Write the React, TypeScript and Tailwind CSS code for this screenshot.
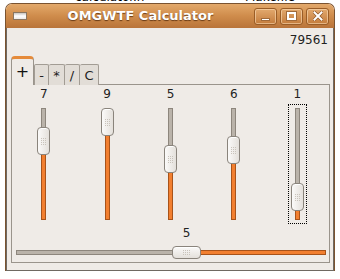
const values = [7, 9, 5, 6, 1];

function Grip({ vertical }: { vertical: boolean }) {
  const cols = vertical ? 3 : 4;
  const rows = vertical ? 4 : 3;
  const dots = [];
  for (let r = 0; r < rows; r++) {
    for (let c = 0; c < cols; c++) {
      dots.push(<rect key={`${r}-${c}`} x={c * 2} y={r * 2} width="1" height="1" fill="#c9c3bb" />);
    }
  }
  return (
    <svg width={cols * 2 - 1} height={rows * 2 - 1} className="block">
      {dots}
    </svg>
  );
}

function VSlider({ value, focused }: { value: number; focused: boolean }) {
  const top = Math.round(84 - (value / 9) * 84);
  return (
    <div className="flex flex-col items-center">
      <div className="text-[12px] leading-[14px] text-[#222]">{value}</div>
      <div
        className={
          focused
            ? "mt-[3px] border border-dotted border-black px-[2px] py-[3px]"
            : "mt-[3px] border border-dotted border-transparent px-[2px] py-[3px]"
        }
      >
        <div className="relative w-[13px] h-[112px]">
          <div className="absolute left-[4px] top-0 w-[5px] h-full bg-[#bab3aa] border border-[#8d867d]" />
          <div
            className="absolute left-[4px] bottom-0 w-[5px] bg-[#f27f30] border border-[#a8531a]"
            style={{ height: 112 - top - 14 }}
          />
          {/* handle */}
          <div
            className="absolute left-0 w-[13px] h-[28px] rounded-[4px] border border-[#8a847c] bg-gradient-to-r from-[#fbfaf9] to-[#e4e0db] flex items-center justify-center shadow-[inset_0_1px_0_#fff]"
            style={{ top }}
          >
            <Grip vertical />
          </div>
        </div>
      </div>
    </div>
  );
}

function HSlider({ value }: { value: number }) {
  const left = Math.round((value / 9) * 281);
  return (
    <div className="flex flex-col">
      <div className="text-[12px] leading-[14px] text-[#222] pl-[4px]">
        <div className="w-[29px] text-center" style={{ marginLeft: left }}>
          {value}
        </div>
      </div>
      <div className="mt-[6px] pl-[4px]">
        <div className="relative w-[310px] h-[13px]">
          <div className="absolute left-0 top-[4px] h-[5px] w-full bg-[#bab3aa] border border-[#8d867d]" />
          <div
            className="absolute right-0 top-[4px] h-[5px] bg-[#f27f30] border border-[#a8531a]"
            style={{ width: 310 - left - 14 }}
          />
          <div
            className="absolute top-0 w-[29px] h-[13px] rounded-[4px] border border-[#8a847c] bg-gradient-to-b from-[#fbfaf9] to-[#e4e0db] flex items-center justify-center shadow-[inset_0_1px_0_#fff]"
            style={{ left }}
          >
            <Grip vertical={false} />
          </div>
        </div>
      </div>
    </div>
  );
}

function TitleButton({ children }: { children: React.ReactNode }) {
  return (
    <div className="w-[23px] h-[17px] rounded-[3px] border border-[#9a5d27] bg-gradient-to-b from-[#e2a96e] to-[#c47c3b] shadow-[inset_0_0_0_1px_rgba(255,225,190,0.55)] flex items-center justify-center">
      {children}
    </div>
  );
}

export default function App() {
  return (
    <div className="relative w-[340px] h-[279px] bg-white overflow-hidden font-['DejaVu_Sans',sans-serif]">
      {/* desktop behind the window */}
      <div className="absolute left-[75px] top-[-10px] text-[12px] leading-[14px] text-black">calculator.h</div>
      <div className="absolute left-[245px] top-[-10px] text-[12px] leading-[14px] text-black">Makefile</div>

      <div className="relative ml-[5px] mt-[3px] w-[330px] h-[268px] flex flex-col rounded-t-[7px] overflow-hidden border border-[#7a5330] border-b-0">
        {/* title bar */}
        <div className="h-[24px] flex items-center pl-[7px] pr-[5px] bg-gradient-to-b from-[#e3a96b] via-[#cf8c4b] to-[#b9743a]">
          <div className="w-[14px] h-[8px] bg-gradient-to-b from-[#c9c5c0] via-[#ffffff] to-[#ece9e5] border border-[#8a7660]" />
          <div className="flex-1 text-center text-white font-bold text-[13px] leading-[16px] [text-shadow:0_1px_1px_rgba(80,40,10,0.8)]">
            OMGWTF Calculator
          </div>
          <div className="flex gap-[3px]">
            <TitleButton>
              <div className="w-[9px] h-[3px] bg-white mt-[6px] border border-[#a06a3a]" />
            </TitleButton>
            <TitleButton>
              <div className="w-[9px] h-[8px] border-2 border-white outline outline-1 outline-[#a06a3a]" />
            </TitleButton>
            <TitleButton>
              <svg width="10" height="10" viewBox="0 0 10 10">
                <path d="M1.5 1.5 L8.5 8.5 M8.5 1.5 L1.5 8.5" stroke="#8a5226" strokeWidth="3.2" strokeLinecap="square" />
                <path d="M1.5 1.5 L8.5 8.5 M8.5 1.5 L1.5 8.5" stroke="#ffffff" strokeWidth="2" strokeLinecap="square" />
              </svg>
            </TitleButton>
          </div>
        </div>

        {/* body */}
        <div className="flex-1 bg-[#efebe7] border-l border-r border-b border-[#6f6962] px-[4px] flex flex-col">
          <div className="mt-[5px] h-[14px] text-right text-[12px] leading-[14px] text-[#222] pr-[1px]">79561</div>

          {/* tabs */}
          <div className="mt-[9px] flex items-end relative z-10 -mb-px">
            <div className="w-[23px] h-[29px] rounded-t-[4px] border-t-[3px] border-t-[#e58a3a] border-l border-r border-[#9a948c] bg-[#efebe7] flex items-center justify-center text-[16px] leading-none text-[#111] pb-[1px]">
              +
            </div>
            <div className="w-[15px] h-[21px] rounded-t-[2px] border border-b-0 border-[#a29c94] bg-[#e2ddd7] flex items-center justify-center text-[13px] leading-none text-[#222]">
              -
            </div>
            <div className="w-[16px] h-[21px] rounded-t-[2px] border border-b-0 border-l-0 border-[#a29c94] bg-[#e2ddd7] flex items-center justify-center text-[13px] leading-none text-[#222]">
              *
            </div>
            <div className="w-[15px] h-[21px] rounded-t-[2px] border border-b-0 border-l-0 border-[#a29c94] bg-[#e2ddd7] flex items-center justify-center text-[13px] leading-none text-[#222]">
              /
            </div>
            <div className="w-[19px] h-[21px] rounded-t-[2px] border border-b-0 border-l-0 border-[#a29c94] bg-[#e2ddd7] flex items-center justify-center text-[13px] leading-none text-[#222]">
              C
            </div>
          </div>

          {/* tab panel */}
          <div className="w-[319px] border border-[#9a948c] pt-[2px] pb-[3px] flex flex-col">
            <div className="grid grid-cols-5">
              {values.map((v, i) => (
                <VSlider key={i} value={v} focused={i === 4} />
              ))}
            </div>
            <div className="mt-[2px]">
              <HSlider value={5} />
            </div>
          </div>
        </div>
      </div>
    </div>
  );
}
